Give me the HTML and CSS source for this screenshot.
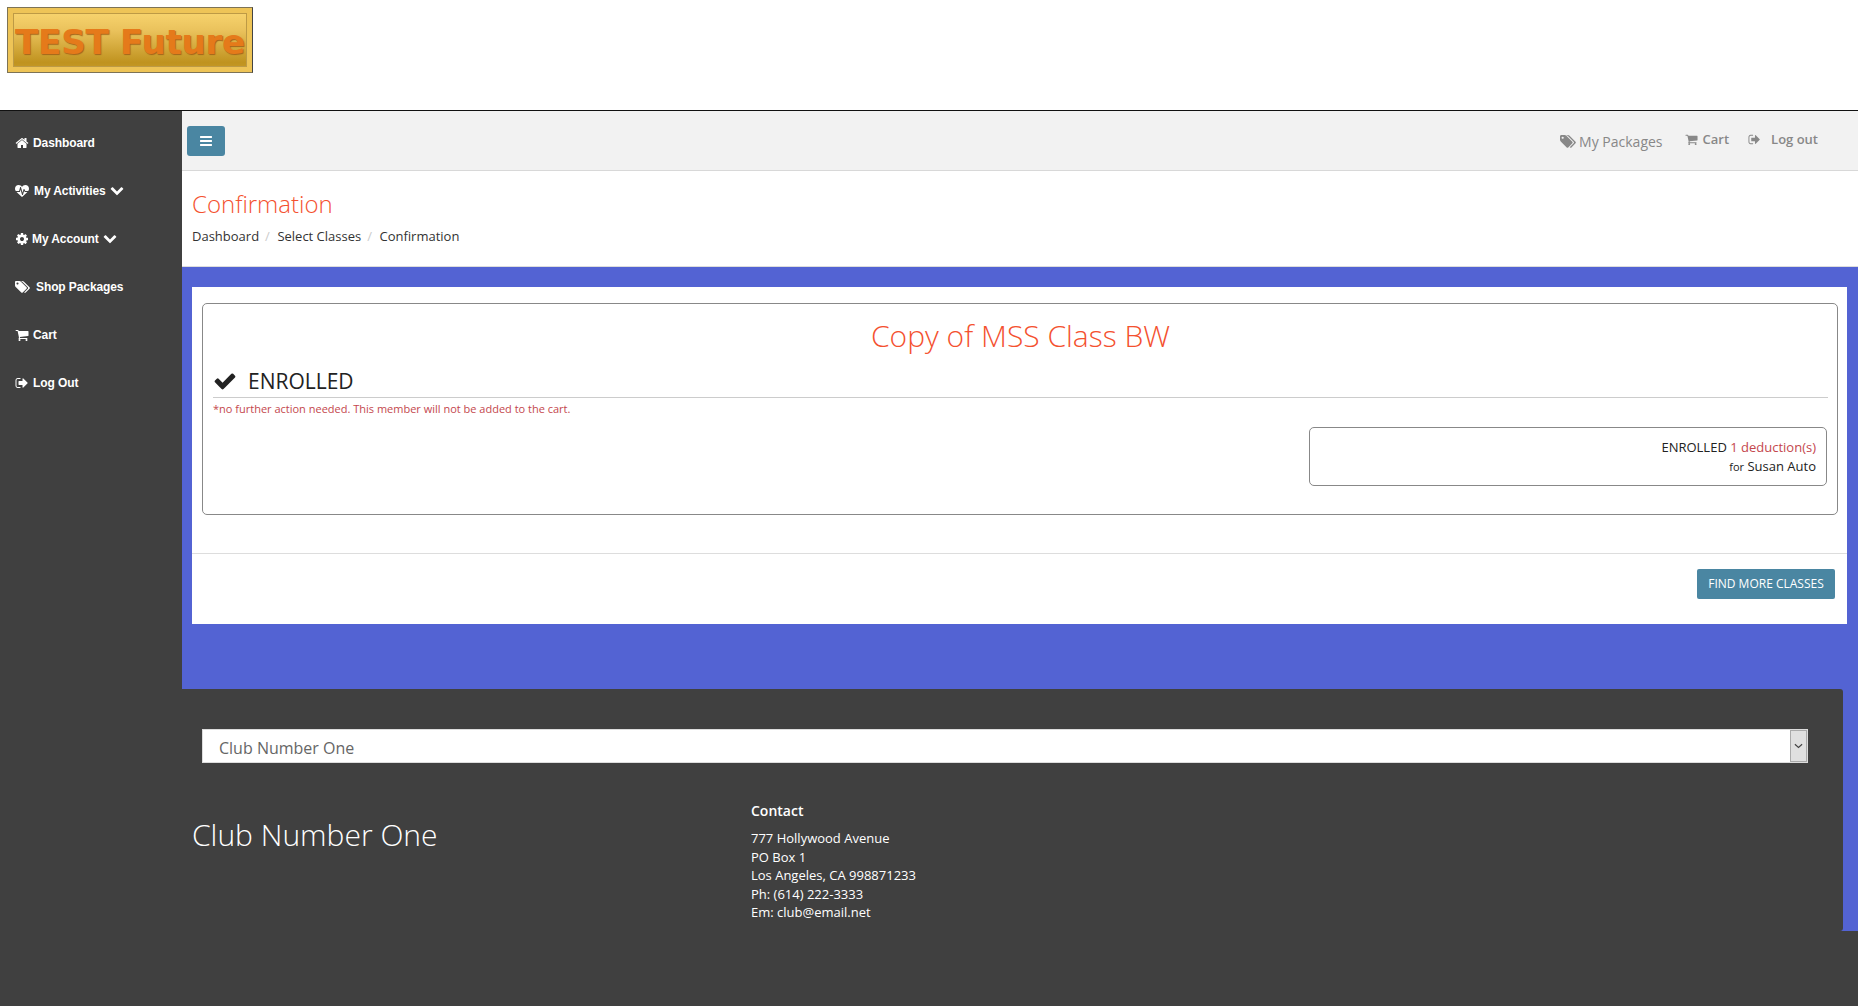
FILE: index.html
```html
<!DOCTYPE html>
<html lang="en">
<head>
    <meta charset="UTF-8" />
    <title>Confirmation</title>
    <link rel="stylesheet" href="styles.css">
</head>
<body>

<svg class="icon-defs" xmlns="http://www.w3.org/2000/svg">
    <symbol id="i-home" viewBox="0 0 1792 1792"><path d="M1472 992v480q0 26-19 45t-45 19h-384v-384h-256v384h-384q-26 0-45-19t-19-45v-480q0-1 .5-3t.5-3l575-474 575 474q1 2 1 6zm223-69l-62 74q-8 9-21 11h-3q-13 0-21-7l-692-577-692 577q-12 8-24 7-13-2-21-11l-62-74q-8-10-7-23.5t11-21.5l719-599q32-26 76-26t76 26l244 204v-195q0-14 9-23t23-9h192q14 0 23 9t9 23v408l219 182q10 8 11 21.5t-7 23.5z"/></symbol>
    <symbol id="i-heartbeat" viewBox="0 0 1792 1792"><path d="M1280 1024h305q-5 6-10 10.5t-9 7.5l-3 4-623 600q-18 18-44 18t-44-18l-624-602q-5-2-21-20h369q22 0 39.5-13.5t22.5-34.5l70-281 190 667q6 20 23 33t39 13q21 0 38-13t23-33l146-485 56 112q18 35 57 35zm512-428q0 145-103 300h-369l-111-221q-8-17-25.5-27t-36.5-8q-45 5-56 46l-129 430-196-686q-6-20-23.5-33t-39.5-13-39 13.5-22 34.5l-116 464h-423q-103-155-103-300 0-220 127-344t351-124q62 0 126.5 21.5t120 58 95.5 68.5 76 68q36-36 76-68t95.5-68.5 120-58 126.5-21.5q224 0 351 124t127 344z"/></symbol>
    <symbol id="i-cog" viewBox="0 0 1792 1792"><path d="M1152 896q0-106-75-181t-181-75-181 75-75 181 75 181 181 75 181-75 75-181zm512-109v222q0 12-8 23t-20 13l-185 28q-19 54-39 91 35 50 107 138 10 12 10 25t-9 23q-27 37-99 108t-94 71q-12 0-26-9l-138-108q-44 23-91 38-16 136-29 186-7 28-36 28h-222q-14 0-24.5-8.5t-11.5-21.5l-28-184q-49-16-90-37l-141 107q-10 9-25 9-14 0-25-11-126-114-165-168-7-10-7-23 0-12 8-23 15-21 51-66.5t54-70.5q-27-50-41-99l-183-27q-13-2-21-12.5t-8-23.5v-222q0-12 8-23t19-13l186-28q14-46 39-92-40-57-107-138-10-12-10-24 0-10 9-23 26-36 98.5-107.5t94.5-71.5q13 0 26 10l138 107q44-23 91-38 16-136 29-186 7-28 36-28h222q14 0 24.5 8.5t11.5 21.5l28 184q49 16 90 37l142-107q9-9 24-9 13 0 25 10 129 119 165 170 7 8 7 22 0 12-8 23-15 21-51 66.5t-54 70.5q26 50 41 98l183 28q13 2 21 12.5t8 23.5z"/></symbol>
    <symbol id="i-tags" viewBox="0 0 1920 1792"><path d="M448 448q0-53-37.5-90.5t-90.5-37.5-90.5 37.5-37.5 90.5 37.5 90.5 90.5 37.5 90.5-37.5 37.5-90.5zm1067 576q0 53-37 90l-491 492q-39 37-91 37-53 0-90-37l-715-716q-38-37-64.5-101t-26.5-117v-416q0-52 38-90t90-38h416q53 0 117 26.5t102 64.5l715 714q37 39 37 91zm384 0q0 53-37 90l-491 492q-39 37-91 37-36 0-59-14t-53-45l470-470q37-37 37-90 0-52-37-91l-715-714q-38-38-102-64.5t-117-26.5h224q53 0 117 26.5t102 64.5l715 714q37 39 37 91z"/></symbol>
    <symbol id="i-cart" viewBox="0 0 1792 1792"><path d="M704 1536q0 52-38 90t-90 38-90-38-38-90 38-90 90-38 90 38 38 90zm896 0q0 52-38 90t-90 38-90-38-38-90 38-90 90-38 90 38 38 90zm128-1088v512q0 24-16.5 42.5t-40.5 21.5l-1044 122q13 60 13 70 0 16-24 64h920q26 0 45 19t19 45-19 45-45 19h-1024q-26 0-45-19t-19-45q0-11 8-31.5t16-36 21.5-40 15.5-29.5l-177-823h-204q-26 0-45-19t-19-45 19-45 45-19h256q16 0 28.5 6.5t19.5 15.5 13 24.5 8 26 5.5 29.5 4.5 26h1201q26 0 45 19t19 45z"/></symbol>
    <symbol id="i-logout" viewBox="0 0 1792 1792"><path d="M704 1440q0 4 1 20t.5 26.5-3 23.5-10 19.5-20.5 6.5h-320q-119 0-203.5-84.5t-84.5-203.5v-704q0-119 84.5-203.5t203.5-84.5h320q13 0 22.5 9.5t9.5 22.5q0 4 1 20t.5 26.5-3 23.5-10 19.5-20.5 6.5h-320q-66 0-113 47t-47 113v704q0 66 47 113t113 47h312l11.5 1 11.5 3 8 5.5 7 9 2 13.5zm928-544q0 26-19 45l-544 544q-19 19-45 19t-45-19-19-45v-288h-448q-26 0-45-19t-19-45v-384q0-26 19-45t45-19h448v-288q0-26 19-45t45-19 45 19l544 544q19 19 19 45z"/></symbol>
    <symbol id="i-chevron" viewBox="0 0 1792 1792"><path d="M1683 808l-742 741q-19 19-45 19t-45-19l-742-741q-19-19-19-45.5t19-45.5l166-165q19-19 45-19t45 19l531 531 531-531q19-19 45-19t45 19l166 165q19 19 19 45.5t-19 45.5z"/></symbol>
    <symbol id="i-bars" viewBox="0 0 1792 1792"><path d="M1664 1344v128q0 26-19 45t-45 19h-1408q-26 0-45-19t-19-45v-128q0-26 19-45t45-19h1408q26 0 45 19t19 45zm0-512v128q0 26-19 45t-45 19h-1408q-26 0-45-19t-19-45v-128q0-26 19-45t45-19h1408q26 0 45 19t19 45zm0-512v128q0 26-19 45t-45 19h-1408q-26 0-45-19t-19-45v-128q0-26 19-45t45-19h1408q26 0 45 19t19 45z"/></symbol>
    <symbol id="i-check" viewBox="0 0 1792 1792"><path d="M1671 566q0 40-28 68l-724 724-136 136q-28 28-68 28t-68-28l-136-136-362-362q-28-28-28-68t28-68l136-136q28-28 68-28t68 28l294 295 656-657q28-28 68-28t68 28l136 136q28 28 28 68z"/></symbol>
</svg>

<header class="site-header">
    <div class="logo"><span class="logo-text">TEST Future</span></div>
</header>

<div class="layout">
    <nav class="sidebar">
        <a class="side-link" href="#"><svg class="side-icon"><use href="#i-home"/></svg><span class="gap-7">Dashboard</span></a>
        <a class="side-link" href="#"><svg class="side-icon"><use href="#i-heartbeat"/></svg><span class="gap-8">My Activities</span><svg class="side-chevron"><use href="#i-chevron"/></svg></a>
        <a class="side-link" href="#"><svg class="side-icon"><use href="#i-cog"/></svg><span class="gap-6">My Account</span><svg class="side-chevron"><use href="#i-chevron"/></svg></a>
        <a class="side-link" href="#"><svg class="side-icon side-icon-wide"><use href="#i-tags"/></svg><span class="gap-7">Shop Packages</span></a>
        <a class="side-link" href="#"><svg class="side-icon"><use href="#i-cart"/></svg><span class="gap-7">Cart</span></a>
        <a class="side-link" href="#"><svg class="side-icon"><use href="#i-logout"/></svg><span class="gap-7">Log Out</span></a>
    </nav>

    <main class="main">
        <div class="topbar">
            <button class="menu-btn"><svg class="menu-icon"><use href="#i-bars"/></svg></button>
            <div class="top-links">
                <a class="top-link top-packages" href="#"><svg class="top-icon-tags"><use href="#i-tags"/></svg>My Packages</a>
                <a class="top-link top-cart" href="#"><svg class="top-icon"><use href="#i-cart"/></svg>Cart</a>
                <a class="top-link top-logout" href="#"><svg class="top-icon"><use href="#i-logout"/></svg>Log out</a>
            </div>
        </div>

        <div class="page-head">
            <h1 class="page-title">Confirmation</h1>
            <ol class="crumbs">
                <li>Dashboard</li>
                <li>Select Classes</li>
                <li>Confirmation</li>
            </ol>
        </div>

        <div class="content">
            <section class="card">
                <div class="class-box">
                    <h2 class="class-title">Copy of MSS Class BW</h2>
                    <div class="status">
                        <svg class="status-icon"><use href="#i-check"/></svg>
                        <span>ENROLLED</span>
                    </div>
                    <p class="status-note">*no further action needed. This member will not be added to the cart.</p>
                    <div class="member-row">
                        <div class="member-box">
                            <div>ENROLLED <span class="deduction">1 deduction(s)</span></div>
                            <div><small class="for">for</small> Susan Auto</div>
                        </div>
                    </div>
                </div>
                <div class="card-foot">
                    <a class="find-btn" href="#">FIND MORE CLASSES</a>
                </div>
            </section>

            <footer class="footer">
                <div class="select-wrap">
                    <select class="club-select">
                        <option>Club Number One</option>
                    </select>
                    <span class="select-arrow"><svg class="arrow-icon" viewBox="0 0 10 6"><path d="M1 1l4 3.5L9 1" fill="none" stroke="#444" stroke-width="1.3"/></svg></span>
                </div>
                <div class="footer-cols">
                    <div class="club-name">Club Number One</div>
                    <div class="contact">
                        <div class="contact-head">Contact</div>
                        <div>777 Hollywood Avenue</div>
                        <div>PO Box 1</div>
                        <div>Los Angeles, CA 998871233</div>
                        <div>Ph: (614) 222-3333</div>
                        <div>Em: club@email.net</div>
                    </div>
                </div>
            </footer>
        </div>
    </main>
</div>

</body>
</html>
```

FILE: styles.css
```css
body {
    margin: 0;
    background: #404040;
    font-family: "Open Sans", sans-serif;
    font-size: 13px;
    color: #333;
    overflow: hidden;
}
a {
    text-decoration: none;
    color: inherit;
}
.icon-defs {
    display: none;
}

/* header */
.site-header {
    height: 96px;
    background: #fff;
    border-bottom: 1px solid #111;
    padding: 7px;
}
.logo {
    width: 246px;
    height: 66px;
    box-sizing: border-box;
    border: 1px solid #7d7355;
    border-right-color: #444;
    background: linear-gradient(#fbd872, #eac25c 35%, #c0931f 85%, #c99c2a);
    box-shadow: inset 0 0 0 5px #eec457, inset 0 0 0 6px #bd9a45;
    display: flex;
    align-items: center;
    justify-content: center;
    padding-top: 3px;
}
.logo-text {
    font-family: "DejaVu Sans", sans-serif;
    font-weight: bold;
    font-size: 34px;
    letter-spacing: -0.2px;
    color: #e57a1a;
    text-shadow: 1px 1px 1px #a4651a;
    white-space: nowrap;
}

.layout {
    display: grid;
    grid-template-columns: 182px 1fr;
}

/* sidebar */
.sidebar {
    background: #404040;
    padding-top: 8px;
}
.side-link {
    display: flex;
    align-items: center;
    height: 48px;
    padding-left: 15px;
    font-family: "Liberation Sans", Arial, sans-serif;
    font-weight: bold;
    font-size: 12px;
    letter-spacing: -0.1px;
    color: #fff;
}
.side-icon {
    width: 14px;
    height: 14px;
    fill: #fff;
}
.side-icon-wide {
    width: 15px;
    margin-right: 2px;
}
.gap-6 {
    margin-left: 3px;
}
.gap-7 {
    margin-left: 4px;
}
.gap-8 {
    margin-left: 5px;
}
.side-chevron {
    width: 14px;
    height: 14px;
    margin: -2px 0 0 4px;
    fill: #fff;
}

/* top bar */
.topbar {
    display: flex;
    justify-content: space-between;
    align-items: center;
    height: 59px;
    padding: 0 40px 0 5px;
    background: #f2f2f2;
    border-bottom: 1px solid #d8d8d8;
}
.menu-btn {
    width: 38px;
    height: 30px;
    padding: 0;
    border: 0;
    border-radius: 3px;
    background: #4a86a2;
    display: flex;
    align-items: center;
    justify-content: center;
}
.menu-icon {
    width: 14px;
    height: 14px;
    fill: #fff;
}
.top-links {
    display: flex;
    align-items: flex-start;
    color: #888;
    font-size: 13px;
}
.top-link {
    display: flex;
    align-items: center;
}
.top-packages {
    font-size: 14px;
    margin-right: 22px;
    padding-top: 2px;
}
.top-icon-tags {
    width: 16px;
    height: 15px;
    fill: #888;
    margin-right: 3px;
}
.top-icon {
    width: 13px;
    height: 13px;
    fill: #888;
    margin-right: 5px;
}
.top-cart {
    font-weight: 600;
    margin-right: 19px;
}
.top-logout {
    font-weight: 600;
}
.top-logout .top-icon {
    margin-right: 10px;
}

/* page heading */
.page-head {
    height: 95px;
    padding: 0 10px;
    background: #fff;
    border-bottom: 1px solid #ddd;
}
.page-title {
    margin: 0;
    padding-top: 16px;
    font-size: 24px;
    line-height: 34px;
    font-weight: 300;
    color: #f4512f;
}
.crumbs {
    display: flex;
    list-style: none;
    margin: 6px 0 0;
    padding: 0;
    line-height: 18px;
}
.crumbs li + li::before {
    content: "/";
    color: #ccc;
    padding: 0 7.5px 0 6px;
}

/* content */
.content {
    background: #5363d3;
    padding-top: 20px;
    height: 664px;
    box-sizing: border-box;
}
.card {
    margin: 0 11px 65px 10px;
    height: 337px;
    box-sizing: border-box;
    background: #fff;
    padding-top: 16px;
}
.class-box {
    height: 212px;
    box-sizing: border-box;
    margin: 0 9px 0 10px;
    padding: 0 9px 0 10px;
    border: 1px solid #888;
    border-radius: 5px;
}
.class-title {
    margin: 12px 0 0;
    text-align: center;
    font-size: 30px;
    line-height: 40px;
    font-weight: 300;
    color: #f4512f;
}
.status {
    display: flex;
    align-items: center;
    margin-top: 9px;
    height: 33px;
    box-sizing: border-box;
    font-size: 21px;
    color: #222;
    border-bottom: 1px solid #ccc;
}
.status-icon {
    width: 24px;
    height: 24px;
    fill: #222;
    margin-right: 11px;
}
.status-note {
    margin: 4px 0 0;
    font-size: 11px;
    line-height: 14px;
    color: #c4474d;
}
.member-row {
    display: flex;
    justify-content: flex-end;
    margin-top: 11px;
    margin-right: 1px;
}
.member-box {
    width: 518px;
    height: 59px;
    box-sizing: border-box;
    padding: 10px 10px 0;
    border: 1px solid #888;
    border-radius: 5px;
    text-align: right;
    line-height: 19px;
    color: #222;
}
.deduction {
    color: #c4474d;
}
.for {
    font-size: 11px;
}
.card-foot {
    margin-top: 38px;
    padding: 15px 12px 0 0;
    border-top: 1px solid #ddd;
    display: flex;
    justify-content: flex-end;
}
.find-btn {
    width: 138px;
    height: 30px;
    border-radius: 2px;
    background: #4a86a2;
    color: #fff;
    font-size: 12px;
    line-height: 30px;
    text-align: center;
}

/* footer */
.footer {
    margin-right: 15px;
    height: 242px;
    box-sizing: border-box;
    padding-top: 40px;
    background: #404040;
    border-radius: 0 3px 3px 0;
    color: #fff;
}
.select-wrap {
    position: relative;
    margin: 0 35px 0 20px;
    height: 34px;
}
.club-select {
    display: block;
    width: 100%;
    height: 34px;
    padding: 3px 16px 0;
    border: 1px solid #ddd;
    border-radius: 0;
    background: #fff;
    color: #666;
    font-family: inherit;
    font-size: 16px;
    appearance: none;
}
.select-arrow {
    position: absolute;
    top: 1px;
    right: 1px;
    width: 17px;
    height: 32px;
    box-sizing: border-box;
    border: 1px solid #aaa;
    background: #e0e0e0;
    display: flex;
    align-items: center;
    justify-content: center;
}
.arrow-icon {
    width: 9px;
    height: 6px;
}
.footer-cols {
    display: flex;
    padding: 38px 0 0 10px;
}
.club-name {
    width: 559px;
    padding-top: 13px;
    font-size: 30px;
    line-height: 42px;
    font-weight: 300;
}
.contact {
    line-height: 18.6px;
}
.contact-head {
    font-size: 14px;
    font-weight: 600;
    line-height: 20px;
    margin-bottom: 8px;
}
```
